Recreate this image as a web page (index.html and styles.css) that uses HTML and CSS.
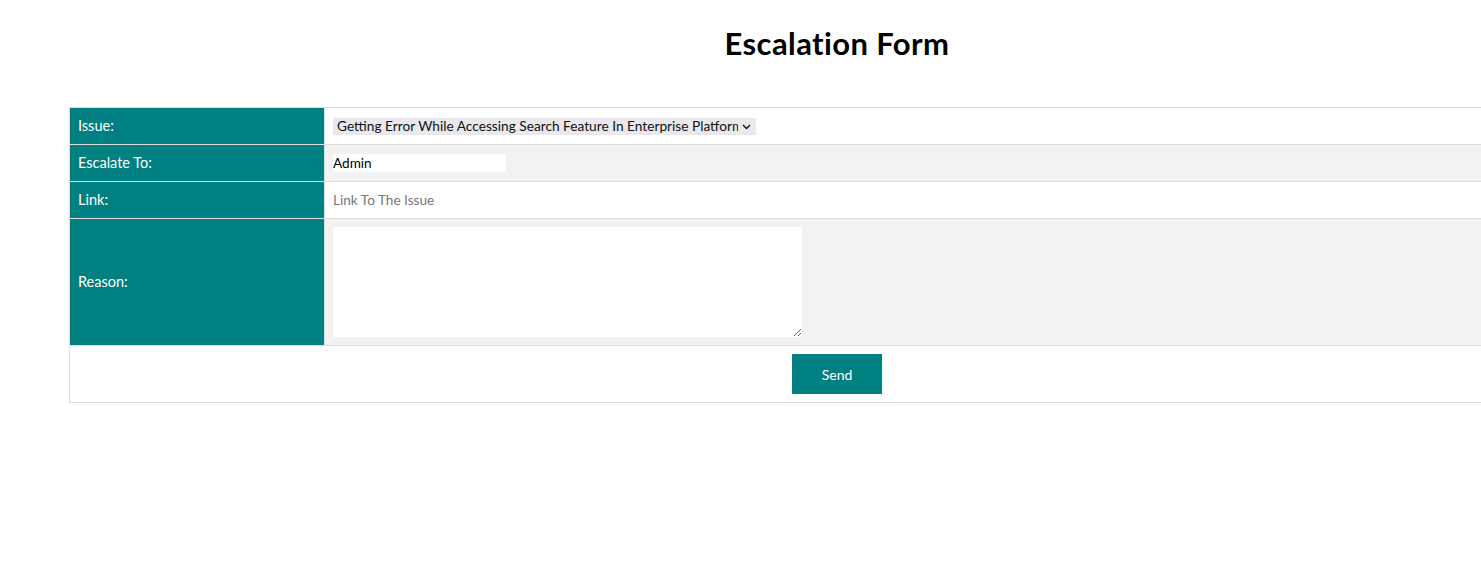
FILE: index.html
```html
<!DOCTYPE html>
<html lang="en">
<head>
<meta charset="utf-8">
<title>Escalation Form</title>
<link rel="stylesheet" href="styles.css">
</head>
<body>
<main class="page">
  <h1 class="title">Escalation Form</h1>
  <form class="form">
    <table class="form-table">
      <tr class="row row-odd">
        <td class="label">Issue:</td>
        <td class="field">
          <span class="select-wrap">
            <select class="select">
              <option>Getting Error While Accessing Search Feature In Enterprise Platform</option>
            </select>
            <svg class="chev" width="9" height="6" viewBox="0 0 9 6"><path d="M1 1l3.5 3.5L8 1" fill="none" stroke="#111" stroke-width="1.4"/></svg>
          </span>
        </td>
      </tr>
      <tr class="row row-even">
        <td class="label">Escalate To:</td>
        <td class="field"><input class="input" type="text" value="Admin"></td>
      </tr>
      <tr class="row row-odd">
        <td class="label">Link:</td>
        <td class="field"><input class="input" type="text" placeholder="Link To The Issue"></td>
      </tr>
      <tr class="row row-even">
        <td class="label">Reason:</td>
        <td class="field"><textarea class="textarea"></textarea></td>
      </tr>
      <tr class="row row-odd">
        <td class="actions" colspan="2"><button class="btn" type="button">Send</button></td>
      </tr>
    </table>
  </form>
</main>
</body>
</html>
```

FILE: styles.css
```css
html, body {
  margin: 0;
  padding: 0;
  overflow: hidden;
  background: #fff;
}
body {
  font-family: "Lato", "Noto Sans", sans-serif;
  color: #000;
}
.page {
  width: 1536px;
  padding-left: 69px;
}
.title {
  margin: 0;
  padding-top: 25px;
  height: 107px;
  box-sizing: border-box;
  text-align: center;
  font-size: 31px;
  font-weight: 700;
  line-height: 36px;
  letter-spacing: 0.4px;
}
.form {
  margin: 0;
}
.form-table {
  width: 1536px;
  border-collapse: collapse;
  font-size: 14px;
}
.form-table td {
  border: 1px solid #ddd;
  padding: 8px;
  height: 20px;
  line-height: 20px;
}
.row-odd { background: #fff; }
.row-even { background: #f2f2f2; }
.form-table td.label {
  width: 238px;
  background: #008080;
  color: #fff;
  font-size: 14.5px;
}
.field {
  vertical-align: middle;
}
.select-wrap {
  position: relative;
  display: block;
  width: 423px;
}
.select {
  -webkit-appearance: none;
  appearance: none;
  width: 423px;
  height: 17px;
  border: none;
  border-radius: 0;
  background: #e9e9ed;
  font-family: "Lato", "Noto Sans", sans-serif;
  font-size: 13.7px;
  color: #111;
  padding: 0 18px 0 4px;
  line-height: 16px;
  display: block;
  outline: none;
}
.chev {
  position: absolute;
  right: 5px;
  top: 6px;
}
.input {
  width: 173px;
  height: 18px;
  box-sizing: border-box;
  border: none;
  background: #fff;
  padding: 0;
  font-family: "Lato", "Noto Sans", sans-serif;
  font-size: 13.6px;
  color: #000;
  display: block;
  outline: none;
}
.input::placeholder {
  color: #777;
}
.textarea {
  display: block;
  width: 469px;
  height: 110px;
  box-sizing: border-box;
  border: none;
  background: #fff;
  margin: 0;
  padding: 2px;
  font-family: "Lato", "Noto Sans", sans-serif;
  font-size: 13.6px;
}
.form-table td.actions {
  text-align: center;
  height: 40px;
  line-height: 40px;
}
.btn {
  width: 90px;
  height: 40px;
  border: none;
  background: #008080;
  color: #fff;
  font-family: "Lato", "Noto Sans", sans-serif;
  font-size: 14px;
  vertical-align: top;
  cursor: pointer;
}
```
